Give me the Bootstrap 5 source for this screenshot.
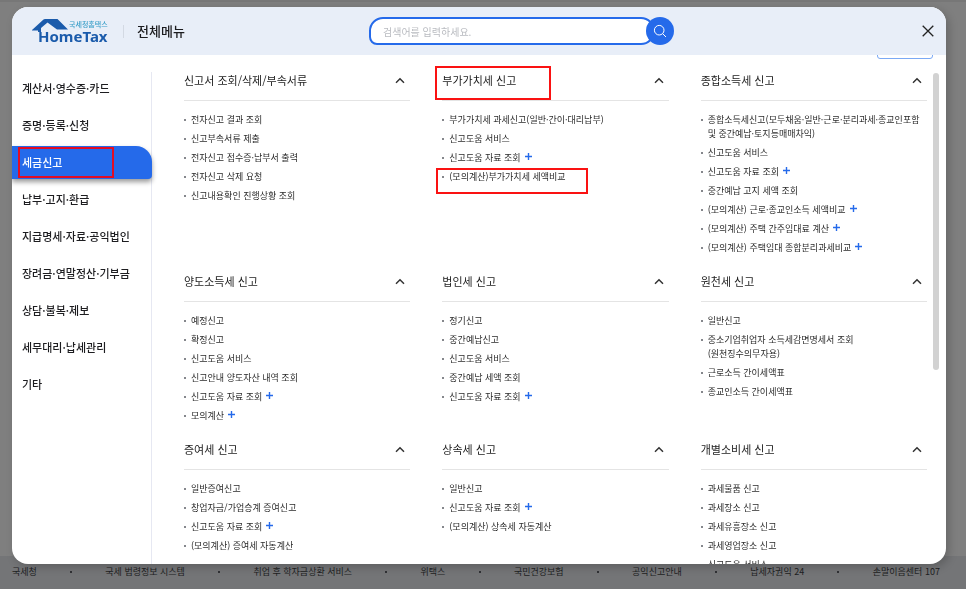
<!DOCTYPE html>
<html lang="ko">
<head>
<meta charset="utf-8">
<meta name="viewport" content="width=device-width, initial-scale=1">
<title>HomeTax 전체메뉴</title>
<link href="https://cdn.jsdelivr.net/npm/bootstrap@5.3.0/dist/css/bootstrap.min.css" rel="stylesheet">
<style>
:root { --ht-blue: #256aea; --ht-red: #fa1212; }
body { font-family: "Noto Sans CJK KR", sans-serif; font-size: 9px; line-height: 14px; color: #2b2b2b; background: #7f7f7f; border-top: 2px solid #777; }
a { color: inherit; text-decoration: none; }
.site-foot { height: 33px; background: #747577; color: #1d1e22; padding: 0 26px 2px 12px; }
.site-foot .sep { width: 2px; height: 2px; background: #303135; }
.menu-sheet { top: 7px; right: 20px; bottom: 25px; left: 12px; border-radius: 16px; overflow: hidden; background: #fff; box-shadow: 3px 3px 10px rgba(0,0,0,.2); }
.sheet-head { display: grid; grid-template-columns: 337px minmax(0, 305px) 1fr; height: 48px; background: #e8eef8; padding: 0 12px 0 20px; }
.sheet-title { font-size: 13px; line-height: 20px; font-weight: 500; color: #1c1c1f; }
.title-rule { width: 1px; height: 13px; background: #d3d9e3; margin: 0 13px 0 14px; }
.search-box input { min-height: 28px; height: 28px; border: 2px solid var(--ht-blue); border-radius: 14px 14px 14px 8px; padding: 0 12px; font-size: 10px; }
.search-box input::placeholder { color: #b9bbc0; }
.search-box button { width: 28px; height: 28px; margin-left: -9px; border: 0; border-radius: 50%; background: var(--ht-blue); }
.side-menu { width: 140px; margin-top: 17px; border-right: 1px solid #e6e8f2; gap: 4px; font-size: 11px; font-weight: 500; color: #1d1d20; }
.side-menu a { line-height: 32px; height: 33px; padding-left: 10px; }
.side-menu a.current { background: var(--ht-blue); color: #fff; margin-right: -1px; border-radius: 0 16px 4px 0; box-shadow: 0 3px 5px rgba(0,0,0,.4); }
.menu-area { padding: 0 6px 0 32px; min-width: 0; overflow: hidden; }
.close-all { width: 56px; height: 22px; margin: -18px -6px 0 0; border: 1px solid #7ba9f5; border-radius: 3px; background: #fff; }
.menu-grid { display: grid; grid-template-columns: repeat(3, minmax(0, 1fr)); column-gap: 32px; row-gap: 8px; margin-top: 3px; }
.group-head { height: 39px; border-bottom: 1px solid #e4e4e4; padding: 0 5px 2px 0; }
.group-head h2 { font-size: 11px; line-height: 16px; font-weight: 400; color: #1c1c1c; }
.group-list { padding-top: 12px; gap: 5px; }
.group-list li { position: relative; padding-left: 7px; background: linear-gradient(#85878c, #85878c) 0 6px / 2px 2px no-repeat; }
.group-list li svg { margin-left: 4px; vertical-align: baseline; }
.scroll-thumb { width: 6px; height: 297px; border-radius: 3px; background: #d2d2d2; margin: 18px 7px 0 0; }
.marker-box { position: absolute; border: 2px solid var(--ht-red); pointer-events: none; }
.marker-side { top: 1px; left: 6px; width: 96px; height: 31px; border-color: #e30d24; }
.marker-head { top: 4px; left: -7px; width: 116px; height: 34px; }
.marker-item { top: -2px; left: -6px; width: 152px; height: 26px; }
</style>
<script src="https://cdn.jsdelivr.net/npm/bootstrap@5.3.0/dist/js/bootstrap.bundle.min.js"></script>
</head>
<body class="vh-100 d-flex flex-column overflow-hidden">
<footer class="site-foot mt-auto d-flex align-items-center justify-content-between">
  <a href="#">국세청</a><span class="sep"></span>
  <a href="#">국세 법령정보 시스템</a><span class="sep"></span>
  <a href="#">취업 후 학자금상환 서비스</a><span class="sep"></span>
  <a href="#">위택스</a><span class="sep"></span>
  <a href="#">국민건강보험</a><span class="sep"></span>
  <a href="#">공익신고안내</a><span class="sep"></span>
  <a href="#">납세자권익 24</a><span class="sep"></span>
  <a href="#">손말이음센터 107</a>
</footer>

<div class="menu-sheet position-fixed d-flex flex-column" role="dialog" aria-labelledby="sheetTitle">
  <header class="sheet-head align-items-center flex-shrink-0">
    <div class="d-flex align-items-center">
      <a href="#" class="d-flex" aria-label="국세청홈택스 HomeTax">
        <svg width="77" height="28" viewBox="0 0 77 28">
          <path d="M0 13 11.500 2.500Q12 2 13 2H25.500L36 12.500H25L15.500 5.500 9 11V15H6V13.500H0Z" fill="#1b5bab"/>
          <text x="37" y="10" font-family="Noto Sans CJK KR, sans-serif" font-size="7" font-weight="500" fill="#3a9fc9">국세청홈택스</text>
          <text x="6" y="25" font-family="Noto Sans, sans-serif" font-size="15" font-weight="700" fill="#1b5bab">HomeTax</text>
        </svg>
      </a>
      <span class="title-rule"></span>
      <h1 class="sheet-title m-0" id="sheetTitle">전체메뉴</h1>
    </div>
    <form class="search-box d-flex">
      <input class="form-control shadow-none" type="text" placeholder="검색어를 입력하세요." aria-label="검색어">
      <button type="button" class="d-flex align-items-center justify-content-center p-0 position-relative flex-shrink-0" aria-label="검색">
        <svg width="14" height="14" viewBox="0 0 14 14" fill="none" stroke="#fff"><circle cx="6.200" cy="6.200" r="4.800"/><path d="m9.700 9.700 3.300 3.300"/></svg>
      </button>
    </form>
    <button type="button" class="border-0 bg-transparent p-0 d-flex ms-auto" aria-label="닫기">
      <svg width="12" height="12" viewBox="0 0 12 12"><path d="m.7.7 10.600 10.600M11.300.7.7 11.300" stroke="#222" stroke-width="1.300"/></svg>
    </button>
  </header>

  <div class="d-flex flex-grow-1 overflow-hidden">
    <nav class="side-menu d-flex flex-column flex-shrink-0" aria-label="전체메뉴">
      <a href="#">계산서·영수증·카드</a>
      <a href="#">증명·등록·신청</a>
      <a href="#" class="current position-relative" aria-current="page">세금신고<span class="marker-box marker-side"></span></a>
      <a href="#">납부·고지·환급</a>
      <a href="#">지급명세·자료·공익법인</a>
      <a href="#">장려금·연말정산·기부금</a>
      <a href="#">상담·불복·제보</a>
      <a href="#">세무대리·납세관리</a>
      <a href="#">기타</a>
    </nav>

    <main class="menu-area flex-grow-1">
      <div class="d-flex justify-content-end">
        <button type="button" class="close-all" aria-label="전체 닫기"></button>
      </div>
      <div class="menu-grid" id="menuGrid"></div>
    </main>
    <div class="scroll-thumb flex-shrink-0"></div>
  </div>
</div>

<script>
// A trailing "+" marks an entry that has sub-entries; a leading "!" marks a highlighted one.
const groups = [
  ["신고서 조회/삭제/부속서류", "전자신고 결과 조회", "신고부속서류 제출", "전자신고 접수증·납부서 출력", "전자신고 삭제 요청", "신고내용확인 진행상황 조회"],
  ["!부가가치세 신고", "부가가치세 과세신고(일반·간이·대리납부)", "신고도움 서비스", "신고도움 자료 조회+", "!(모의계산)부가가치세 세액비교"],
  ["종합소득세 신고", "종합소득세신고(모두채움·일반·근로·분리과세·종교인포함<br>및 중간예납·토지등매매차익)", "신고도움 서비스", "신고도움 자료 조회+", "중간예납 고지 세액 조회", "(모의계산) 근로·종교인소득 세액비교+", "(모의계산) 주택 간주임대료 계산+", "(모의계산) 주택임대 종합분리과세비교+"],
  ["양도소득세 신고", "예정신고", "확정신고", "신고도움 서비스", "신고안내 양도자산 내역 조회", "신고도움 자료 조회+", "모의계산+"],
  ["법인세 신고", "정기신고", "중간예납신고", "신고도움 서비스", "중간예납 세액 조회", "신고도움 자료 조회+"],
  ["원천세 신고", "일반신고", "중소기업취업자 소득세감면명세서 조회<br>(원천징수의무자용)", "근로소득 간이세액표", "종교인소득 간이세액표"],
  ["증여세 신고", "일반증여신고", "창업자금/가업승계 증여신고", "신고도움 자료 조회+", "(모의계산) 증여세 자동계산"],
  ["상속세 신고", "일반신고", "신고도움 자료 조회+", "(모의계산) 상속세 자동계산"],
  ["개별소비세 신고", "과세물품 신고", "과세장소 신고", "과세유흥장소 신고", "과세영업장소 신고", "신고도움 서비스"]
];
const plus = '<svg width="7" height="8" viewBox="0 0 7 8" aria-hidden="true"><path d="M3.500 0v7M0 3.500h7" stroke="#256aea" stroke-width="1.400"/></svg>';
const clean = t => t.replace(/^!/, "").replace(/\+$/, "");
const box = (t, kind) => t.startsWith("!") ? `<span class="marker-box marker-${kind}"></span>` : "";
document.getElementById("menuGrid").innerHTML = groups.map(([title, ...items]) => `
  <section>
    <div class="group-head position-relative d-flex align-items-center justify-content-between">
      <h2 class="m-0">${clean(title)}</h2>
      <button type="button" class="border-0 bg-transparent p-0 d-flex" aria-label="${clean(title)} 접기">
        <svg width="10" height="7" viewBox="0 0 10 7"><path d="M1 5.700 5 1.700 9 5.700" fill="none" stroke="#333" stroke-width="1.500"/></svg>
      </button>${box(title, "head")}
    </div>
    <ul class="group-list list-unstyled d-flex flex-column m-0">
      ${items.map(t => `<li><a href="#" class="text-nowrap">${clean(t)}${t.endsWith("+") ? plus : ""}</a>${box(t, "item")}</li>`).join("")}
    </ul>
  </section>`).join("");
</script>
</body>
</html>
